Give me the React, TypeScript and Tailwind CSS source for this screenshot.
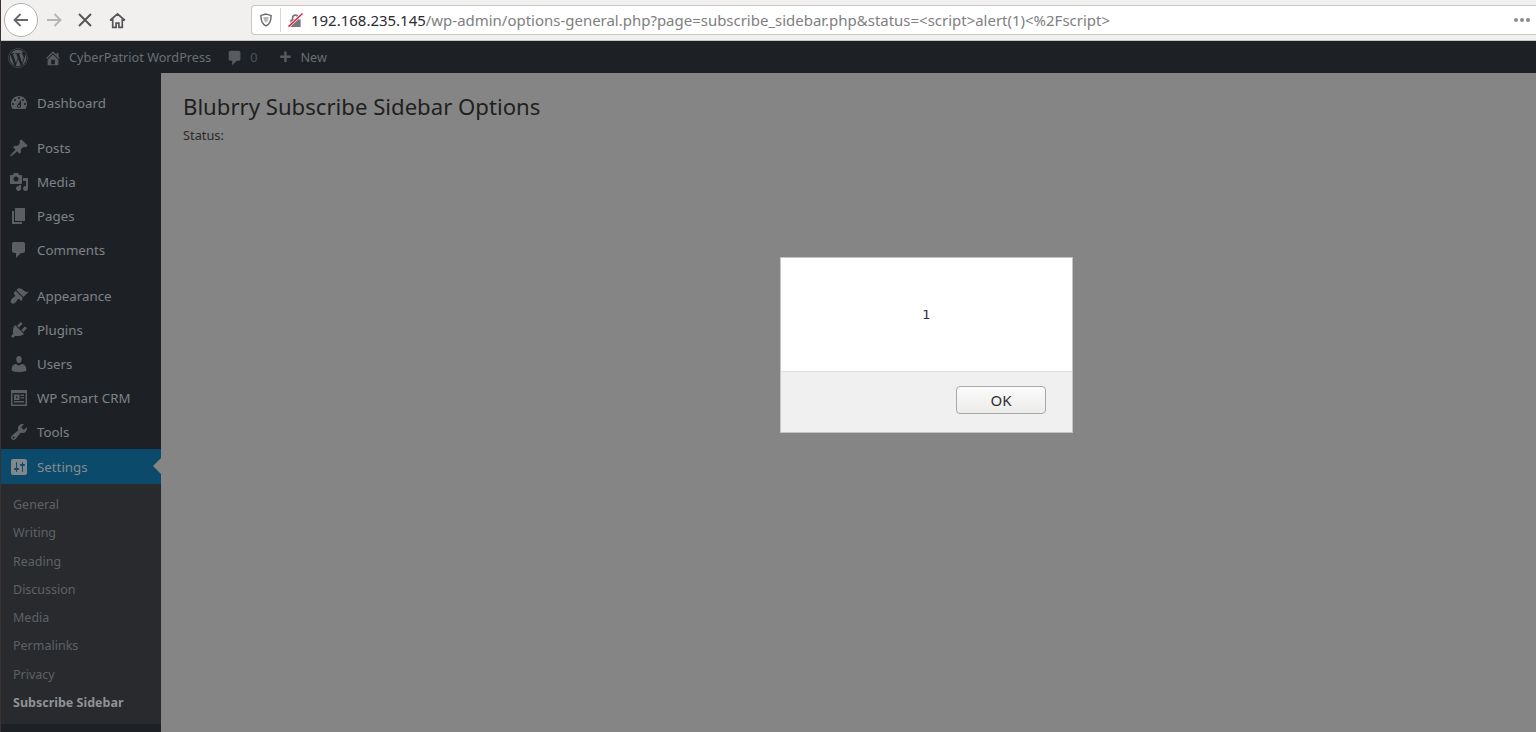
import { FaWordpress } from "react-icons/fa";

const FONT = "font-['Noto_Sans','Open_Sans',sans-serif]";

// dashicons-style menu glyphs, 20x20 box
const ICONS: Record<string, string> = {
  dashboard:
    "M3.76 16h12.48c1.1-1.37 1.76-3.11 1.76-5 0-4.42-3.58-8-8-8s-8 3.58-8 8c0 1.89.66 3.63 1.76 5zM10 4c.55 0 1 .45 1 1s-.45 1-1 1-1-.45-1-1 .45-1 1-1zM6 6c.55 0 1 .45 1 1s-.45 1-1 1-1-.45-1-1 .45-1 1-1zm8 0c.55 0 1 .45 1 1s-.45 1-1 1-1-.45-1-1 .45-1 1-1zm-5.37 5.55L12 7v6c0 1.1-.9 2-2 2s-2-.9-2-2c0-.57.24-1.08.63-1.45zM4 10c.55 0 1 .45 1 1s-.45 1-1 1-1-.45-1-1 .45-1 1-1zm12 0c.55 0 1 .45 1 1s-.45 1-1 1-1-.45-1-1 .45-1 1-1zm-5 3c0-.55-.45-1-1-1s-1 .45-1 1 .45 1 1 1 1-.45 1-1z",
  post: "M10.44 3.02l1.82-1.82 6.36 6.35-1.83 1.82c-1.05-.68-2.48-.57-3.41.36l-.75.75c-.92.93-1.04 2.35-.35 3.41l-1.83 1.82-2.41-2.41-2.8 2.79c-.42.42-3.38 2.71-3.8 2.29s1.86-3.39 2.28-3.81l2.79-2.79L4.1 9.36l1.83-1.82c1.05.69 2.48.57 3.4-.36l.75-.75c.93-.92 1.05-2.35.36-3.41z",
  media:
    "M13 11V4c0-.55-.45-1-1-1h-1.67L9 1H5L3.67 3H2c-.55 0-1 .45-1 1v7c0 .55.45 1 1 1h10c.55 0 1-.45 1-1zM7 4.5c1.38 0 2.5 1.12 2.5 2.5S8.38 9.5 7 9.5 4.5 8.38 4.5 7 5.62 4.5 7 4.5zM14 6h5v10.5c0 1.38-1.12 2.5-2.5 2.5S14 17.88 14 16.5s1.12-2.5 2.5-2.5c.17 0 .34.02.5.05V9h-3V6zm-4 8.05V13h2v3.5c0 1.38-1.12 2.5-2.5 2.5S7 17.88 7 16.5 8.12 14 9.5 14c.17 0 .34.02.5.05z",
  page: "M6 15V2h10v13H6zm-1 1h8v2H3V5h2v11z",
  comments:
    "M5 2h9c1.1 0 2 .9 2 2v7c0 1.1-.9 2-2 2h-2l-5 5v-5H5c-1.1 0-2-.9-2-2V4c0-1.1.9-2 2-2z",
  appearance:
    "M14.48 11.06L7.41 3.99l1.5-1.5c.5-.56 2.3-.47 3.51.32 1.21.8 1.43 1.28 2.91 2.1 1.18.64 2.45 1.26 4.45.85zm-.71.71L6.7 4.7 4.93 6.47c-.39.39-.39 1.02 0 1.41l1.06 1.06c.39.39.39 1.03 0 1.42-.6.6-1.43 1.11-2.21 1.69-.35.26-.7.53-1.01.84-1.43 1.43-1.4 3.02-.37 4.05s2.62 1.06 4.05-.37c.31-.31.58-.66.84-1.01.58-.78 1.09-1.61 1.69-2.21.39-.39 1.03-.39 1.42 0l1.06 1.06c.39.39 1.02.39 1.41 0z",
  plugin:
    "M13.11 4.36L9.87 7.6 8 5.73l3.24-3.24c.35-.34 1.05-.2 1.56.32.52.51.66 1.21.31 1.55zm-8 1.77l.91-1.12 9.01 9.01-1.19.84c-.71.71-2.63 1.16-3.82 1.16H6.14L4.9 17.26c-.59.59-1.54.59-2.12 0-.59-.58-.59-1.53 0-2.12l1.24-1.24v-3.88c0-1.13.4-3.19 1.09-3.89zm7.26 3.97l3.24-3.24c.34-.35 1.04-.21 1.55.31.52.51.66 1.21.31 1.55l-3.24 3.25z",
  users:
    "M10 9.25c-2.27 0-2.73-3.44-2.73-3.44C7 4.02 7.82 2 9.97 2c2.16 0 2.98 2.02 2.71 3.81 0 0-.41 3.44-2.68 3.44zm0 2.57L12.72 10c2.39 0 4.52 2.33 4.52 4.53v2.49s-3.65 1.13-7.24 1.13c-3.65 0-7.24-1.13-7.24-1.13v-2.49c0-2.25 1.94-4.48 4.47-4.48z",
  crm: "M2 2h16v16H2V2zm1.5 3v11.5h13V5h-13zM5 6.5h5.5V12H5V6.5zm6.5 0H15V8h-3.5V6.5zm0 2.7H15v1.4h-3.5V9.2zM5 13h10v1.5H5V13zm2.2-5v2.2h1.7V9.4H8V8h-.8z",
  tools:
    "M16.68 9.77c-1.34 1.34-3.3 1.67-4.95.99l-5.41 6.52c-.99.99-2.59.99-3.58 0s-.99-2.59 0-3.57l6.52-5.42c-.68-1.65-.35-3.61.99-4.95 1.28-1.28 3.12-1.62 4.72-1.06l-2.89 2.89 2.82 2.82 2.86-2.87c.53 1.58.18 3.39-1.08 4.65zM3.81 16.21c.4.39 1.04.39 1.43 0 .4-.4.4-1.04 0-1.43-.39-.4-1.03-.4-1.43 0-.39.39-.39 1.03 0 1.43z",
  settings:
    "M18 16V4c0-1.1-.9-2-2-2H4c-1.1 0-2 .9-2 2v12c0 1.1.9 2 2 2h12c1.1 0 2-.9 2-2zM8 11h1c.55 0 1 .45 1 1s-.45 1-1 1H8v1.5c0 .28-.22.5-.5.5s-.5-.22-.5-.5V13H6c-.55 0-1-.45-1-1s.45-1 1-1h1V5.5c0-.28.22-.5.5-.5s.5.22.5.5V11zm5-2h-1c-.55 0-1-.45-1-1s.45-1 1-1h1V5.5c0-.28.22-.5.5-.5s.5.22.5.5V7h1c.55 0 1 .45 1 1s-.45 1-1 1h-1v5.5c0 .28-.22.5-.5.5s-.5-.22-.5-.5V9z",
  home: "M16 8.5l1.53 1.53-1.06 1.06L10 4.62l-6.47 6.47-1.06-1.06L10 2.5l4 4v-2h2v4zm-6-2.46l6 5.99V18H4v-5.97zM12 17v-5H8v5h4z",
  plus: "M17 7v3h-5v5H9v-5H4V7h5V2h3v5h5z",
};

function Glyph({ name, className }: { name: string; className: string }) {
  return (
    <svg viewBox="0 0 20 20" fill="currentColor" className={className}>
      <path fillRule="evenodd" d={ICONS[name]} />
    </svg>
  );
}

function MenuItem({ icon, label }: { icon: string; label: string }) {
  return (
    <div className="flex h-[34px] items-center">
      <Glyph name={icon} className="ml-[8px] h-[20px] w-[20px] text-[#5b5f62]" />
      <span className="ml-[8px] pt-[2px] text-[13.3px] text-[#7f8386]">{label}</span>
    </div>
  );
}

function Toolbar() {
  return (
    <div className="flex h-[41px] items-center border-b border-[#c9c7c5] bg-[#f2f0ee]">
      <div className="ml-[3px] flex h-[34px] w-[34px] items-center justify-center rounded-full border border-[#b3b1af] bg-white">
        <svg viewBox="0 0 18 18" className="h-[18px] w-[18px]" fill="none" stroke="#66666a" strokeWidth="1.8">
          <path d="M16 9H2.5M8.5 3L2.5 9l6 6" />
        </svg>
      </div>
      <svg viewBox="0 0 18 18" className="ml-[7px] h-[18px] w-[18px]" fill="none" stroke="#b5b4b3" strokeWidth="1.8">
        <path d="M2 9h13.5M9.5 3l6 6-6 6" />
      </svg>
      <svg viewBox="0 0 16 16" className="ml-[14px] h-[16px] w-[16px]" fill="none" stroke="#55555a" strokeWidth="1.9">
        <path d="M2 2l12 12M14 2L2 14" />
      </svg>
      <svg viewBox="0 0 16 16" className="ml-[16px] h-[17px] w-[17px]" fill="none" stroke="#55555a" strokeWidth="1.6">
        <path d="M1 8l7-6.2L15 8M3.5 6.5V14.5h3.2v-4h2.6v4h3.2V6.5" />
      </svg>
      <div className="ml-[125px] flex h-[30px] min-w-0 flex-1 items-center rounded-l-[4px] border border-r-0 border-[#c9c7c5] bg-white">
        <svg viewBox="0 0 16 16" className="ml-[7px] h-[14px] w-[14px] shrink-0" fill="none" stroke="#66666a" strokeWidth="1.6">
          <path d="M8 1.2l5.8 1.6c.2 5.6-1.6 9.8-5.8 12-4.2-2.2-6-6.4-5.8-12L8 1.2z" />
          <path d="M5 4.6h6c0 2.8-.9 5-3 6.4-2.100-1.400-3-3.600-3-6.400z" fill="#b9b9bb" stroke="none" />
        </svg>
        <div className="ml-[7px] h-[24px] w-px shrink-0 bg-[#d8d6d4]" />
        <svg viewBox="0 0 16 16" className="ml-[7px] h-[15px] w-[15px] shrink-0">
          <path d="M4 7V5.200a3.800 3.800 0 0 1 7.600 0V7H13.500v8H2.500V7H4zm1.800 0h4V5.200a2 2 0 0 0-4 0V7z" fill="#77777a" />
          <path d="M0.500 14.500L15.500 0.500" stroke="#ffffff" strokeWidth="3" />
          <path d="M0.500 14.500L15.500 0.500" stroke="#e0264d" strokeWidth="1.600" />
        </svg>
        <span className="ml-[8px] flex-1 truncate text-[14.97px] text-[#80807f]">
          <span className="text-[#2b2b30]">192.168.235.145</span>
          /wp-admin/options-general.php?page=subscribe_sidebar.php&amp;status=&lt;script&gt;alert(1)&lt;%2Fscript&gt;
        </span>
        <div className="mr-[6px] flex shrink-0 gap-[2px]">
          <div className="h-[4px] w-[4px] rounded-full bg-[#8c8c8e]" />
          <div className="h-[4px] w-[4px] rounded-full bg-[#8c8c8e]" />
          <div className="h-[4px] w-[4px] rounded-full bg-[#8c8c8e]" />
        </div>
      </div>
    </div>
  );
}

function AdminBar() {
  return (
    <div className="flex h-[32px] items-center bg-[#1d2125] pt-[1px] text-[12.7px] text-[#6b6f72]">
      <FaWordpress className="ml-[7px] h-[20px] w-[20px] text-[#585c5f]" />
      <Glyph name="home" className="ml-[16px] h-[18px] w-[18px] text-[#585c5f]" />
      <span className="ml-[7px] whitespace-nowrap">CyberPatriot WordPress</span>
      <Glyph name="comments" className="ml-[15px] h-[18px] w-[18px] text-[#585c5f]" />
      <span className="ml-[6px] text-[#4f5356]">0</span>
      <Glyph name="plus" className="ml-[20px] h-[16px] w-[16px] text-[#585c5f]" />
      <span className="ml-[7px]">New</span>
    </div>
  );
}

function Sidebar() {
  return (
    <div className="w-[160px] shrink-0 bg-[#1d2125] pt-[13px]">
      <MenuItem icon="dashboard" label="Dashboard" />
      <div className="h-[11px]" />
      <MenuItem icon="post" label="Posts" />
      <MenuItem icon="media" label="Media" />
      <MenuItem icon="page" label="Pages" />
      <MenuItem icon="comments" label="Comments" />
      <div className="h-[12px]" />
      <MenuItem icon="appearance" label="Appearance" />
      <MenuItem icon="plugin" label="Plugins" />
      <MenuItem icon="users" label="Users" />
      <MenuItem icon="crm" label="WP Smart CRM" />
      <MenuItem icon="tools" label="Tools" />
      <div className="relative flex h-[35px] items-center bg-[#0b4a6b]">
        <Glyph name="settings" className="ml-[8px] h-[20px] w-[20px] text-[#80888c]" />
        <span className="ml-[8px] pt-[2px] text-[13.3px] text-[#858a8d]">Settings</span>
        <div className="absolute right-0 top-[9px] h-0 w-0 border-y-[8px] border-r-[8px] border-y-transparent border-r-[#858585]" />
      </div>
      <div className="bg-[#282a2e] pb-[6.6px] pt-[7.4px] text-[12.5px] text-[#5e6265]">
        {["General", "Writing", "Reading", "Discussion", "Media", "Permalinks", "Privacy"].map((s) => (
          <div key={s} className="flex h-[28.25px] items-center pl-[12px]">
            {s}
          </div>
        ))}
        <div className="flex h-[28.25px] items-center pl-[12px] font-bold text-[#8f9295]">Subscribe Sidebar</div>
      </div>
    </div>
  );
}

export default function App() {
  return (
    <div className={`relative flex h-[732px] w-[1536px] flex-col overflow-hidden border-l border-[#3a3233] ${FONT}`}>
      <Toolbar />
      <AdminBar />
      <div className="flex min-h-0 flex-1">
        <Sidebar />
        <main className="flex-1 bg-[#858585] pl-[22px] pt-[19px]">
          <h1 className="text-[22.15px] leading-[29px] text-[#1f1f20]">Blubrry Subscribe Sidebar Options</h1>
          <p className="mt-[5px] text-[12.8px] leading-[18px] text-[#2a2a2a]">Status:</p>
        </main>
      </div>

      {/* alert box, sits over the dimmed page */}
      <div className="absolute left-[779px] top-[257px] w-[293px] border border-[#c4c4c4] bg-white">
        <div className="flex h-[113px] items-center justify-center font-['DejaVu_Sans',sans-serif] text-[13px] text-[#2e2e33]">1</div>
        <div className="flex h-[61px] items-center justify-end border-t border-[#dedede] bg-[#f0f0f0] pb-[4px] pr-[26px]">
          <button
            type="button"
            className="h-[28px] w-[90px] rounded-[4px] border border-[#a9a9a9] bg-gradient-to-b from-[#fbfbfb] to-[#ececea] text-[15px] text-[#2e2e33]"
          >
            OK
          </button>
        </div>
      </div>
    </div>
  );
}
